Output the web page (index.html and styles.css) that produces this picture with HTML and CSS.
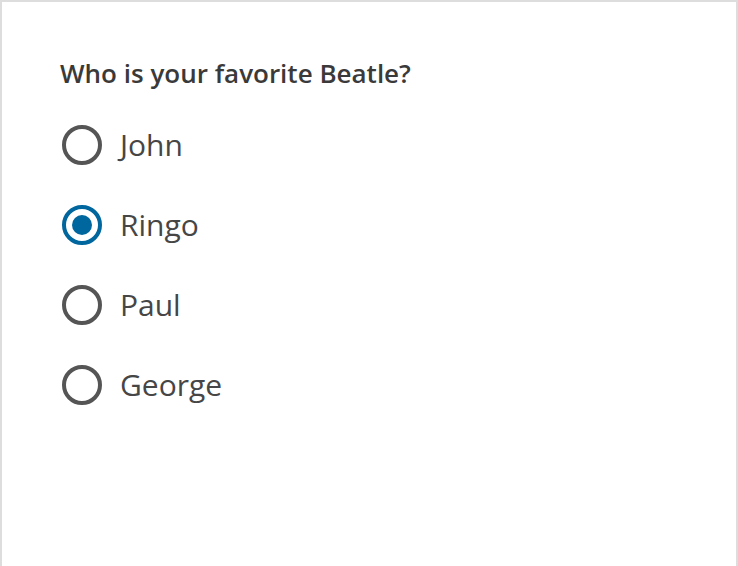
FILE: index.html
```html
<!DOCTYPE html>
<html>
<head>
<meta charset="utf-8">
<link rel="stylesheet" href="styles.css">
</head>
<body>
<div class="panel">
  <fieldset class="group">
    <legend class="question">Who is your favorite Beatle?</legend>
    <label class="option"><span class="radio"></span><span class="label-text">John</span></label>
    <label class="option"><span class="radio checked"></span><span class="label-text">Ringo</span></label>
    <label class="option"><span class="radio"></span><span class="label-text">Paul</span></label>
    <label class="option"><span class="radio"></span><span class="label-text">George</span></label>
  </fieldset>
</div>
</body>
</html>
```

FILE: styles.css
```css
html, body {
  margin: 0;
  padding: 0;
  height: 100%;
  background: #fff;
}
body {
  font-family: "Open Sans", "Noto Sans", sans-serif;
}
.panel {
  box-sizing: border-box;
  height: 100%;
  border: 2px solid #dddddd;
  border-bottom: none;
  padding: 54px 58px 0 58px;
}
.group {
  border: 0;
  margin: 0;
  padding: 0;
  display: flex;
  flex-direction: column;
}
.question {
  padding: 0;
  font-size: 26px;
  font-weight: 600;
  line-height: 34px;
  color: #3a3a3a;
  margin-bottom: 15px;
}
.option {
  display: flex;
  align-items: center;
  height: 80px;
  gap: 18px;
  padding-left: 2px;
}
.radio {
  box-sizing: border-box;
  width: 40px;
  height: 40px;
  border: 4px solid #555555;
  border-radius: 50%;
  display: flex;
  align-items: center;
  justify-content: center;
  flex: none;
}
.radio.checked {
  border-color: #00669e;
}
.radio.checked::after {
  content: "";
  width: 20px;
  height: 20px;
  border-radius: 50%;
  background: #00669e;
}
.label-text {
  font-size: 30px;
  color: #464646;
  line-height: 40px;
}
```
